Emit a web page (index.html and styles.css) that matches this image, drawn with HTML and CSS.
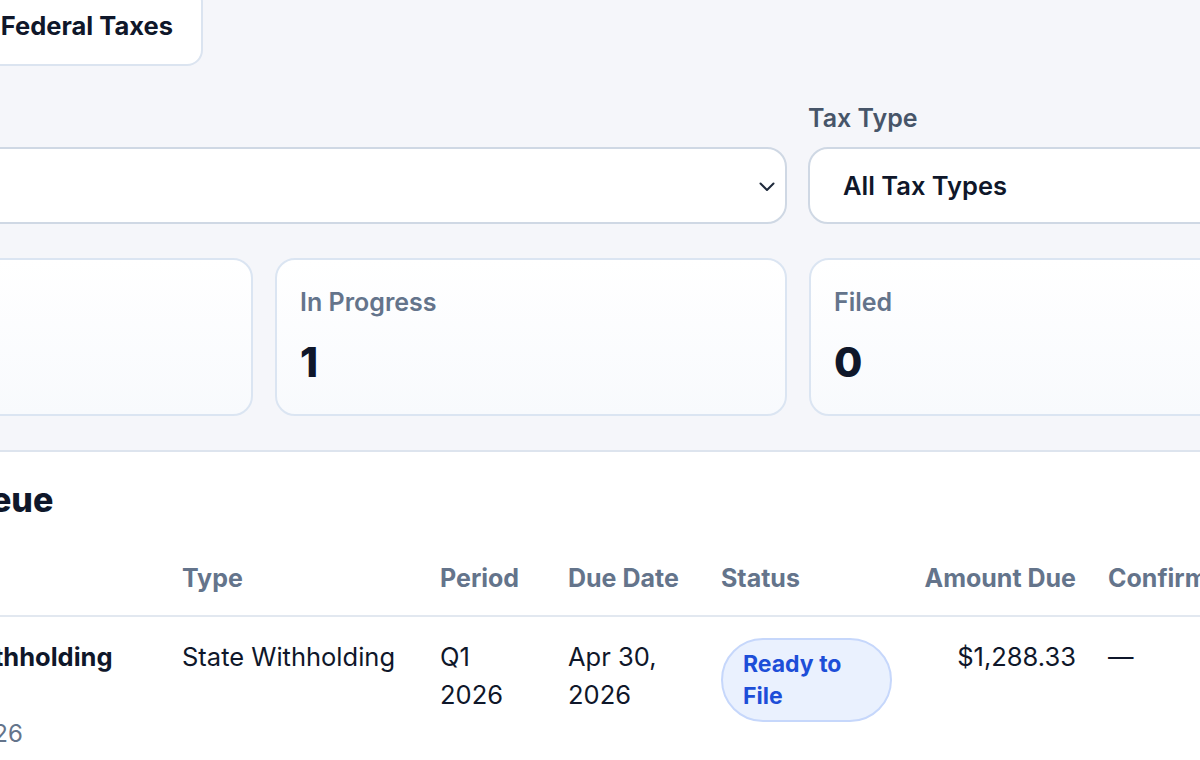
FILE: index.html
```html
<!DOCTYPE html>
<html lang="en">
<head>
    <meta charset="UTF-8">
    <meta name="viewport" content="width=device-width, initial-scale=1.0">
    <title>Tax Filings</title>
    <link rel="stylesheet" href="styles.css">
</head>
<body>
    <div class="page">
        <!-- Filters and summary -->
        <section class="panel">
            <div class="tabs">
                <button class="tab">State Taxes</button>
                <button class="tab active">Federal Taxes</button>
            </div>

            <div class="filters">
                <div class="field">
                    <label>Jurisdiction</label>
                    <div class="select">
                        <span>All Jurisdictions</span>
                        <svg class="chevron" width="16" height="10" viewBox="0 0 16 10"><polyline points="1.5,1.5 8,8 14.5,1.5" fill="none" stroke="#1e293b" stroke-width="2" stroke-linecap="round" stroke-linejoin="round"/></svg>
                    </div>
                </div>
                <div class="field">
                    <label>Tax Type</label>
                    <div class="select">
                        <span>All Tax Types</span>
                    </div>
                </div>
            </div>

            <div class="stats">
                <div class="stat">
                    <div class="stat-label">Not Started</div>
                    <div class="stat-value">2</div>
                </div>
                <div class="stat">
                    <div class="stat-label">In Progress</div>
                    <div class="stat-value">1</div>
                </div>
                <div class="stat">
                    <div class="stat-label">Filed</div>
                    <div class="stat-value">0</div>
                </div>
            </div>
        </section>

        <!-- Filing queue -->
        <section class="queue">
            <h2>Tax Filing Queue</h2>
            <table>
                <colgroup>
                    <col class="c-name">
                    <col class="c-type">
                    <col class="c-period">
                    <col class="c-due">
                    <col class="c-status">
                    <col class="c-amount">
                    <col class="c-confirm">
                </colgroup>
                <thead>
                    <tr>
                        <th>Filing</th>
                        <th>Type</th>
                        <th>Period</th>
                        <th>Due Date</th>
                        <th>Status</th>
                        <th class="num">Amount Due</th>
                        <th>Confirmation #</th>
                    </tr>
                </thead>
                <tbody>
                    <tr>
                        <td>
                            <div class="name">Oregon State Withholding</div>
                            <div class="sub">Jan 1 &ndash; Mar 31, 2026</div>
                        </td>
                        <td>State Withholding</td>
                        <td>Q1 2026</td>
                        <td>Apr 30, 2026</td>
                        <td><span class="pill">Ready to File</span></td>
                        <td class="num">$1,288.33</td>
                        <td>&mdash;</td>
                    </tr>
                </tbody>
            </table>
        </section>
    </div>
</body>
</html>
```

FILE: styles.css
```css
body {
    margin: 0;
    font-family: Inter, "Noto Sans", sans-serif;
    color: #0f172a;
    background-color: #ffffff;
    overflow: hidden;
}
.page {
    margin-top: -14px;
    margin-left: -259px;
    width: 1580px;
}
.panel {
    background-color: #f5f6fa;
    padding-bottom: 34px;
    border-bottom: 2px solid #dde4ee;
    margin-left: -40px;
    padding-left: 40px;
}
.tabs {
    display: flex;
    gap: 10px;
    justify-content: flex-end;
    width: 462px;
}
.tab {
    font-family: inherit;
    font-size: 25.5px;
    font-weight: 700;
    color: #0f172a;
    background-color: #ffffff;
    border: 2px solid #dbe4f0;
    border-radius: 16px;
    padding: 23px 28px;
    line-height: 30px;
}
.filters {
    display: grid;
    grid-template-columns: minmax(0, 1fr) 513px;
    gap: 21px;
    margin-top: 38px;
}
.field label {
    display: block;
    font-size: 25px;
    font-weight: 600;
    color: #475569;
    line-height: 28px;
    margin-bottom: 15px;
}
.select {
    display: flex;
    align-items: center;
    justify-content: space-between;
    height: 77px;
    box-sizing: border-box;
    background-color: #ffffff;
    border: 2px solid #cfd8e4;
    border-radius: 20px;
    padding: 0 10px 0 33px;
    font-size: 25.5px;
    font-weight: 600;
    color: #0f172a;
}
.chevron {
    margin-top: 2px;
}
.stats {
    display: grid;
    grid-template-columns: repeat(3, 1fr);
    gap: 22px;
    margin-top: 34px;
}
.stat {
    height: 158px;
    box-sizing: border-box;
    border: 2px solid #dbe5f2;
    border-radius: 20px;
    background: linear-gradient(#ffffff, #f8fafd);
    padding: 28px 23px;
}
.stat-label {
    font-size: 25px;
    font-weight: 600;
    color: #64748b;
    line-height: 28px;
}
.stat-value {
    font-size: 41px;
    font-weight: 800;
    color: #0f172a;
    line-height: 48px;
    margin-top: 22px;
}
.queue {
    padding-top: 28px;
    padding-left: 34px;
}
.queue h2 {
    margin: 0 0 21px;
    font-size: 34px;
    font-weight: 800;
    line-height: 40px;
}
table {
    border-collapse: collapse;
    table-layout: fixed;
    width: 1517px;
}
.c-name { width: 391px; }
.c-type { width: 258px; }
.c-period { width: 128px; }
.c-due { width: 153px; }
.c-status { width: 203px; }
.c-amount { width: 184px; }
.c-confirm { width: 200px; }
th {
    text-align: left;
    font-size: 25px;
    font-weight: 700;
    color: #64748b;
    line-height: 28px;
    padding: 23px 16px;
    border-bottom: 2px solid #e2e8f0;
    white-space: nowrap;
}
td {
    font-size: 25.5px;
    line-height: 38px;
    padding: 21px 16px;
    vertical-align: top;
    color: #0f172a;
}
.num {
    text-align: right;
}
.name {
    font-weight: 700;
}
.sub {
    font-size: 24px;
    color: #64748b;
    line-height: 34px;
    margin-top: 41px;
}
.pill {
    display: inline-block;
    background-color: #eaf1fe;
    border: 2px solid #c6d7fb;
    border-radius: 44px;
    padding: 8px 20px;
    font-size: 23px;
    font-weight: 700;
    line-height: 32px;
    color: #1d4ed8;
}
```
